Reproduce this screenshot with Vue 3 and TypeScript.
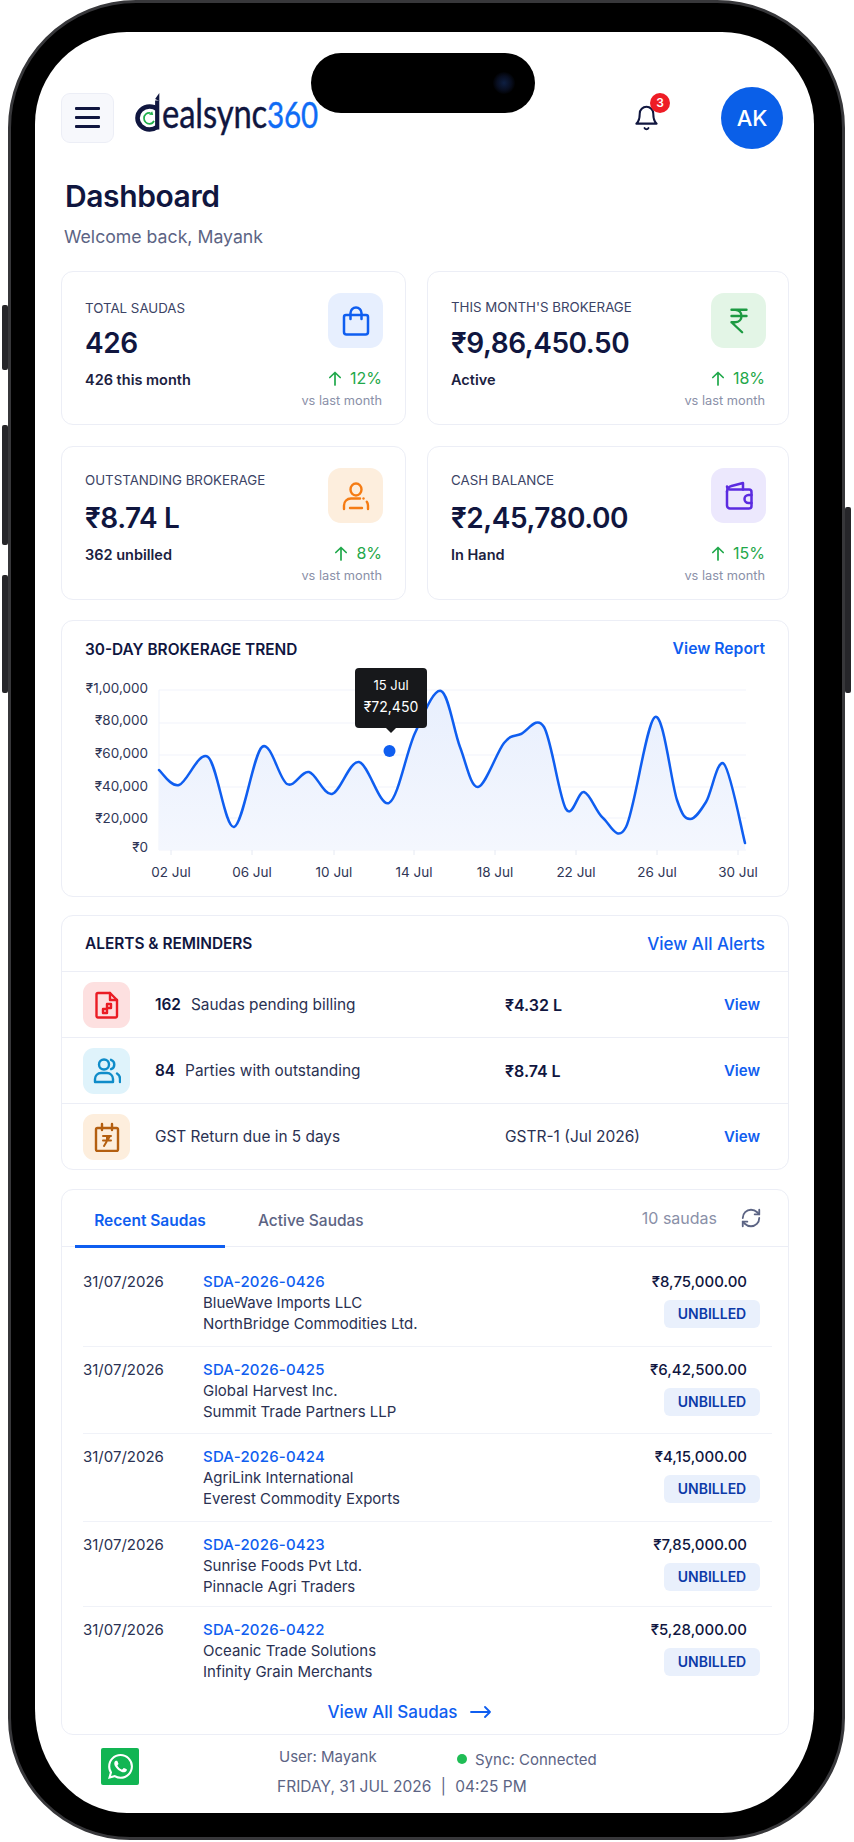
<script setup lang="ts">
const stats = [
  { label: 'TOTAL SAUDAS', value: '426', sub: '426 this month', pct: '12%', tone: 'blue', icon: 'bag' },
  { label: "THIS MONTH'S BROKERAGE", value: '₹9,86,450.50', sub: 'Active', pct: '18%', tone: 'green', icon: 'rupee' },
  { label: 'OUTSTANDING BROKERAGE', value: '₹8.74 L', sub: '362 unbilled', pct: '8%', tone: 'orange', icon: 'user' },
  { label: 'CASH BALANCE', value: '₹2,45,780.00', sub: 'In Hand', pct: '15%', tone: 'purple', icon: 'wallet' },
]

const alerts = [
  { count: '162', text: 'Saudas pending billing', amount: '₹4.32 L', bold: true, tone: 'red', icon: 'doc' },
  { count: '84', text: 'Parties with outstanding', amount: '₹8.74 L', bold: true, tone: 'cyan', icon: 'users' },
  { count: '', text: 'GST Return due in 5 days', amount: 'GSTR-1 (Jul 2026)', bold: false, tone: 'peach', icon: 'cal' },
]

const saudas = [
  { id: 'SDA-2026-0426', a: 'BlueWave Imports LLC', b: 'NorthBridge Commodities Ltd.', amt: '₹8,75,000.00' },
  { id: 'SDA-2026-0425', a: 'Global Harvest Inc.', b: 'Summit Trade Partners LLP', amt: '₹6,42,500.00' },
  { id: 'SDA-2026-0424', a: 'AgriLink International', b: 'Everest Commodity Exports', amt: '₹4,15,000.00' },
  { id: 'SDA-2026-0423', a: 'Sunrise Foods Pvt Ltd.', b: 'Pinnacle Agri Traders', amt: '₹7,85,000.00' },
  { id: 'SDA-2026-0422', a: 'Oceanic Trade Solutions', b: 'Infinity Grain Merchants', amt: '₹5,28,000.00' },
]

const yLabels = [
  { t: '₹1,00,000', y: 693 }, { t: '₹80,000', y: 725 }, { t: '₹60,000', y: 758 },
  { t: '₹40,000', y: 791 }, { t: '₹20,000', y: 823 }, { t: '₹0', y: 852 },
]
const gridY = [690, 723, 755, 787, 818, 850]
const xLabels = [
  { t: '02 Jul', x: 171 }, { t: '06 Jul', x: 252 }, { t: '10 Jul', x: 334 }, { t: '14 Jul', x: 414 },
  { t: '18 Jul', x: 495 }, { t: '22 Jul', x: 576 }, { t: '26 Jul', x: 657 }, { t: '30 Jul', x: 738 },
]

// traced off the reference, in page pixels
const pts: [number, number][] = [
  [159, 770], [179, 785], [208, 757], [234, 827], [262, 747], [287, 784], [309, 772], [332, 794],
  [359, 762], [389, 803], [415, 733], [441, 691], [460, 747], [478, 787], [504, 743], [521, 734],
  [544, 727], [566, 809], [584, 792], [603, 818], [626, 827], [655, 717], [677, 800], [690, 819],
  [706, 802], [724, 764], [745, 843],
]

function smooth(p: [number, number][]) {
  let d = `M${p[0][0]} ${p[0][1]}`
  for (let i = 0; i < p.length - 1; i++) {
    const a = p[Math.max(i - 1, 0)]
    const b = p[i]
    const c = p[i + 1]
    const e = p[Math.min(i + 2, p.length - 1)]
    const c1x = b[0] + (c[0] - a[0]) / 6
    const c1y = b[1] + (c[1] - a[1]) / 6
    const c2x = c[0] - (e[0] - b[0]) / 6
    const c2y = c[1] - (e[1] - b[1]) / 6
    d += `C${c1x.toFixed(1)} ${c1y.toFixed(1)} ${c2x.toFixed(1)} ${c2y.toFixed(1)} ${c[0]} ${c[1]}`
  }
  return d
}
const linePath = smooth(pts)
const areaPath = `${linePath}L745 850L159 850Z`
</script>

<template>
  <div class="phone">
    <i class="side s1"></i><i class="side s2"></i><i class="side s3"></i><i class="side s4"></i>
    <div class="island"><span class="lens"></span></div>
    <div class="screen">
      <header class="top">
        <button class="menu" aria-label="Menu"><span></span><span></span><span></span></button>
        <div class="logo">
          <svg class="mark" width="30" height="44" viewBox="0 0 30 44">
            <path d="M24 16C21.800 14 19.200 13.500 16.600 13.500 10 13.500 4.500 18.700 4.500 25S10 36.500 16.600 36.500c2.800 0 5.300-.8 7.400-2.500" fill="none" stroke="#10163f" stroke-width="4.600" />
            <path d="M24.200 7.500v29" stroke="#10163f" stroke-width="4.200" fill="none" />
            <path d="M22.100 6L26.300 0v8z" fill="#10163f" />
            <path d="M17.500 20c-3.800-.6-6.500 2-6.500 5.200 0 3.200 2.600 5.700 5.600 5.700 2.200 0 3.500-1 4.400-3" fill="none" stroke="#1fae4b" stroke-width="1.700" />
            <path d="M16 21.800l3.200-3.600 1 3.800z" fill="#1fae4b" />
          </svg>
          <span class="word">ealsync<b>360</b></span>
        </div>
        <div class="bell">
          <svg width="27" height="28" viewBox="0 0 24 24" fill="none" stroke="#10163f" stroke-width="1.800" stroke-linecap="round" stroke-linejoin="round">
            <path d="M6 8a6 6 0 0 1 12 0c0 7 3 9 3 9H3s3-2 3-9" />
            <path d="M10.300 21a1.940 1.940 0 0 0 3.400 0" />
          </svg>
          <span class="badge">3</span>
        </div>
        <div class="avatar">AK</div>
      </header>

      <main class="content">
        <h1>Dashboard</h1>
        <p class="welcome">Welcome back, Mayank</p>

        <section class="stats">
          <article v-for="s in stats" :key="s.label" class="card stat">
            <div class="stat-left">
              <div class="stat-label">{{ s.label }}</div>
              <div class="stat-value">{{ s.value }}</div>
              <div class="stat-sub">{{ s.sub }}</div>
            </div>
            <div class="stat-right">
              <div class="stat-icon" :class="s.tone">
                <svg v-if="s.icon === 'bag'" width="30" height="32" viewBox="0 0 30 32" fill="none" stroke="#0f5ef0" stroke-width="2.500" stroke-linecap="round" stroke-linejoin="round">
                  <path d="M5 10h20a2 2 0 0 1 2 2v15a2.500 2.500 0 0 1-2.500 2.500h-19A2.500 2.500 0 0 1 3 27V12a2 2 0 0 1 2-2z" />
                  <path d="M9.500 14V8a5.500 5.500 0 0 1 11 0v6" />
                </svg>
                <svg v-else-if="s.icon === 'rupee'" width="30" height="30" viewBox="0 0 24 24" fill="none" stroke="#1c9a42" stroke-width="1.900" stroke-linecap="round" stroke-linejoin="round">
                  <path d="M6 3h12M6 8h12M6 13l8.500 8M6 13h3M9 13c6.667 0 6.667-10 0-10" />
                </svg>
                <svg v-else-if="s.icon === 'user'" width="30" height="30" viewBox="0 0 30 30" fill="none" stroke="#f57c14" stroke-width="2.400" stroke-linecap="round" stroke-linejoin="round">
                  <ellipse cx="15" cy="8.500" rx="5.500" ry="6" />
                  <path d="M22.500 17.500h.01" />
                  <path d="M3 28v-3.500c0-4 3-7 7-7h9" />
                  <path d="M27 28v-3.500c0-1.500-.5-2.800-1.200-3.800" />
                  <path d="M9 27h12" />
                </svg>
                <svg v-else width="30" height="30" viewBox="0 0 30 30" fill="none" stroke="#5b2be0" stroke-width="2.500" stroke-linecap="round" stroke-linejoin="round">
                  <path d="M3 10.500v14A3 3 0 0 0 6 27.500h19a2.500 2.500 0 0 0 2.500-2.500V11A2.500 2.500 0 0 0 25 8.500H6A3 3 0 0 1 3 5.500" />
                  <path d="M3 10.500A6 6 0 0 1 7.500 5L19 2v6.500" />
                  <path d="M27.500 14h-3a4 4 0 0 0 0 8h3" />
                </svg>
              </div>
              <div class="stat-pct">
                <svg width="14" height="15" viewBox="0 0 14 15" fill="none" stroke="#1fa84a" stroke-width="1.700" stroke-linecap="round" stroke-linejoin="round"><path d="M7 14V1.500M1.800 6.500L7 1.500l5.200 5" /></svg>
                {{ s.pct }}
              </div>
              <div class="stat-vs">vs last month</div>
            </div>
          </article>
        </section>

        <section class="card chart-card">
          <div class="card-head">
            <h2>30-DAY BROKERAGE TREND</h2>
            <a class="link">View Report</a>
          </div>
          <div class="chart">
            <svg width="726" height="225" viewBox="62 660 726 225">
              <defs>
                <linearGradient id="area" x1="0" y1="0" x2="0" y2="1">
                  <stop offset="0" stop-color="#e8effd" />
                  <stop offset="1" stop-color="#f4f7fe" />
                </linearGradient>
              </defs>
              <line v-for="y in gridY" :key="y" x1="159" x2="746" :y1="y" :y2="y" stroke="#f1f4fb" stroke-width="1.200" />
              <line x1="159" x2="159" y1="690" y2="850" stroke="#eff3fb" />
              <line v-for="l in xLabels" :key="l.x" :x1="l.x" :x2="l.x" y1="850" y2="855" stroke="#e6eaf3" />
              <path :d="areaPath" fill="url(#area)" />
              <path :d="linePath" fill="none" stroke="#0f5ef0" stroke-width="2.500" stroke-linecap="round" />
              <circle cx="389.500" cy="751" r="6" fill="#0f5ef0" />
              <text v-for="l in yLabels" :key="l.t" x="148" :y="l.y" text-anchor="end" class="axis">{{ l.t }}</text>
              <text v-for="l in xLabels" :key="l.t" :x="l.x" y="877" text-anchor="middle" class="axis">{{ l.t }}</text>
            </svg>
            <div class="tip"><div>15 Jul</div><div class="tip-val">₹72,450</div></div>
          </div>
        </section>

        <section class="card alerts">
          <div class="alerts-head">
            <h2>ALERTS &amp; REMINDERS</h2>
            <a class="link big">View All Alerts</a>
          </div>
          <div v-for="a in alerts" :key="a.text" class="alert">
            <div class="alert-icon" :class="a.tone">
              <svg v-if="a.icon === 'doc'" width="26" height="28" viewBox="0 0 26 28" fill="none" stroke="#ea1c24" stroke-width="2.400" stroke-linejoin="round" stroke-linecap="round">
                <path d="M4 2h12l7 7v16a1.500 1.500 0 0 1-1.500 1.500h-17.500A1.500 1.500 0 0 1 2.500 25V3.500A1.500 1.500 0 0 1 4 2z" />
                <path d="M16 2v7h7" />
                <path d="M13 13h4v4h-4zM9 18h4v4H9z" stroke-width="2.400" />
              </svg>
              <svg v-else-if="a.icon === 'users'" width="28" height="28" viewBox="0 0 28 28" fill="none" stroke="#0f8cc9" stroke-width="2.400" stroke-linecap="round" stroke-linejoin="round">
                <circle cx="11" cy="7.500" r="5" />
                <path d="M2 25v-3a6 6 0 0 1 6-6h6a6 6 0 0 1 6 6v3z" />
                <path d="M18 2.800a5 5 0 0 1 0 9.400" />
                <path d="M24 16.500a6 6 0 0 1 3 5.200V25" />
              </svg>
              <svg v-else width="28" height="30" viewBox="0 0 28 30" fill="none" stroke="#b45f10" stroke-width="2.400" stroke-linecap="round" stroke-linejoin="round">
                <rect x="3" y="6" width="22" height="23" rx="1.500" />
                <path d="M9 2v6M19 2v6" />
                <path d="M10 14h8M10 18.500h8M14 14v5M17 14l-6 10" stroke-width="2" />
              </svg>
            </div>
            <div class="alert-text"><b v-if="a.count">{{ a.count }}</b>{{ a.text }}</div>
            <div class="alert-amt" :class="{ strong: a.bold }">{{ a.amount }}</div>
            <a class="link view">View</a>
          </div>
        </section>

        <section class="card recent">
          <div class="tabs">
            <div class="tab on">Recent Saudas</div>
            <div class="tab">Active Saudas</div>
            <div class="count">10 saudas</div>
            <svg class="refresh" width="24" height="22" viewBox="0 0 24 24" fill="none" stroke="#5c6484" stroke-width="2" stroke-linecap="round" stroke-linejoin="round">
              <path d="M3 12a9 9 0 0 1 9-9 9.750 9.750 0 0 1 6.740 2.740L21 8" /><path d="M21 3v5h-5" />
              <path d="M21 12a9 9 0 0 1-9 9 9.750 9.750 0 0 1-6.740-2.740L3 16" /><path d="M8 16H3v5" />
            </svg>
          </div>
          <div class="rows">
            <div v-for="r in saudas" :key="r.id" class="row">
              <div class="date">31/07/2026</div>
              <div class="who">
                <div class="sid">{{ r.id }}</div>
                <div>{{ r.a }}</div>
                <div>{{ r.b }}</div>
              </div>
              <div class="money">
                <div class="amt">{{ r.amt }}</div>
                <div class="pill">UNBILLED</div>
              </div>
            </div>
          </div>
          <a class="all">View All Saudas
            <svg width="21" height="12" viewBox="0 0 21 12" fill="none" stroke="#0f5ef0" stroke-width="1.800" stroke-linecap="round" stroke-linejoin="round"><path d="M1 6h19M15 1l5 5-5 5" /></svg>
          </a>
        </section>
      </main>

      <footer class="foot">
        <div class="wa">
          <svg width="25" height="25" viewBox="0 0 24 24" fill="#fff">
            <path d="M17.472 14.382c-.297-.149-1.758-.867-2.030-.967-.273-.099-.471-.148-.670.150-.197.297-.767.966-.940 1.164-.173.199-.347.223-.644.075-.297-.150-1.255-.463-2.390-1.475-.883-.788-1.480-1.761-1.653-2.059-.173-.297-.018-.458.130-.606.134-.133.298-.347.446-.520.149-.174.198-.298.298-.497.099-.198.050-.371-.025-.520-.075-.149-.669-1.612-.916-2.207-.242-.579-.487-.500-.669-.510-.173-.008-.371-.010-.570-.010-.198 0-.520.074-.792.372-.272.297-1.040 1.016-1.040 2.479 0 1.462 1.065 2.875 1.213 3.074.149.198 2.096 3.200 5.077 4.487.709.306 1.262.489 1.694.625.712.227 1.360.195 1.871.118.571-.085 1.758-.719 2.006-1.413.248-.694.248-1.289.173-1.413-.074-.124-.272-.198-.570-.347m-5.421 7.403h-.004a9.870 9.870 0 01-5.031-1.378l-.361-.214-3.741.982.998-3.648-.235-.374a9.860 9.860 0 01-1.510-5.260c.001-5.450 4.436-9.884 9.888-9.884 2.640 0 5.122 1.030 6.988 2.898a9.825 9.825 0 012.893 6.994c-.003 5.450-4.437 9.884-9.885 9.884m8.413-18.297A11.815 11.815 0 0012.050 0C5.495 0 .160 5.335.157 11.892c0 2.096.547 4.142 1.588 5.945L.057 24l6.305-1.654a11.882 11.882 0 005.683 1.448h.005c6.554 0 11.890-5.335 11.893-11.893a11.821 11.821 0 00-3.480-8.413z" />
          </svg>
        </div>
        <div class="foot-info">
          <div class="foot-line">
            <span class="foot-user">User: Mayank</span>
            <span class="foot-sync"><i></i>Sync: Connected</span>
          </div>
          <div class="foot-date">FRIDAY, 31 JUL 2026 <em>|</em> 04:25 PM</div>
        </div>
      </footer>
    </div>
  </div>
</template>

<style>
html, body { background: #fff; }
</style>

<style scoped>
* { box-sizing: border-box; }
.phone {
  position: relative;
  width: 837px;
  height: 1840px;
  margin-left: 8px;
  padding: 29px 28px 0 24px;
  background: #000;
  border: 3px solid #37373a;
  border-radius: 128px 128px 122px 122px;
  font-family: Inter, "Noto Sans", sans-serif;
  color: #10163f;
}
.side { position: absolute; width: 6px; background: #26262a; border-radius: 2px; }
.s1 { left: -9px; top: 302px; height: 65px; }
.s2 { left: -9px; top: 422px; height: 120px; }
.s3 { left: -9px; top: 572px; height: 118px; }
.s4 { right: -9px; top: 504px; height: 186px; }
.island {
  position: absolute;
  z-index: 2;
  left: 300px;
  top: 50px;
  width: 224px;
  height: 60px;
  background: #000;
  border-radius: 30px;
}
.lens {
  position: absolute;
  right: 20px;
  top: 19px;
  width: 22px;
  height: 22px;
  border-radius: 50%;
  background: radial-gradient(circle, #0e1f42 0, #080e20 45%, #000 75%);
}
.screen {
  width: 779px;
  height: 1781px;
  padding-top: 55px;
  background: #fff;
  border-radius: 92px 92px 92px 92px / 92px 92px 104px 104px;
  overflow: hidden;
}
.top {
  display: flex;
  align-items: center;
  height: 61px;
  padding: 0 31px 0 26px;
}
.menu {
  display: flex;
  flex-direction: column;
  justify-content: center;
  gap: 6.500px;
  align-items: center;
  width: 53px;
  height: 50px;
  padding: 0;
  background: #f7f8fc;
  border: 1px solid #eceef6;
  border-radius: 9px;
}
.menu span { display: block; width: 25px; height: 2.400px; background: #10163f; border-radius: 1px; }
.logo { display: flex; align-items: flex-start; margin-left: 19px; margin-top: -5px; height: 44px; }
.mark { flex: none; }
.word {
  display: inline-block;
  margin-left: -1px;
  margin-top: -2px;
  font-family: Lato, sans-serif;
  font-size: 41px;
  line-height: 44px;
  letter-spacing: -.2px;
  color: #10163f;
  white-space: nowrap;
  -webkit-text-stroke: .4px #10163f;
  transform: scaleX(.8);
  transform-origin: left center;
}
.word b { font-weight: 400; color: #0f6cf5; font-size: 37px; -webkit-text-stroke: .4px #0f6cf5; }
.bell { position: relative; margin-left: auto; width: 27px; height: 28px; margin-top: 1px; }
.badge {
  position: absolute;
  left: 17px;
  top: -11px;
  width: 20px;
  height: 20px;
  border-radius: 50%;
  background: #ee1c25;
  color: #fff;
  font-size: 12px;
  font-weight: 600;
  line-height: 20px;
  text-align: center;
}
.avatar {
  width: 62px;
  height: 62px;
  margin-left: 61px;
  border-radius: 50%;
  background: #0a5fe8;
  color: #fff;
  font-size: 22px;
  font-weight: 500;
  line-height: 62px;
  text-align: center;
}
.content { padding: 0 25px 0 26px; }
h1 { margin: 30px 0 0 4px; font-size: 30px; line-height: 36px; font-weight: 600; letter-spacing: -.4px; }
.welcome { margin: 12px 0 0 3px; font-size: 17.700px; line-height: 22px; color: #5c6484; }
h2 { margin: 0; font-size: 15.400px; line-height: 20px; font-weight: 600; }
.card { background: #fff; border: 1px solid #eceef6; border-radius: 12px; }
.stats { display: grid; grid-template-columns: 345px 362px; gap: 21px; margin-top: 23px; }
.stat { display: flex; justify-content: space-between; height: 154px; padding: 21px 23px 0; }
.stat-label { font-size: 13.300px; line-height: 30px; color: #3b4365; }
.stat:nth-child(2) .stat-label { margin: -1px 0 1px; }
.stat:nth-child(n+3) .stat-label { margin: -3px 0 3px; }
.stat-value { font-size: 28px; line-height: 40px; font-weight: 600; letter-spacing: -.45px; }
.stat-sub { margin-top: 7px; font-size: 14.500px; line-height: 20px; font-weight: 600; color: #1b2140; }
.stat-right { display: flex; flex-direction: column; align-items: flex-end; }
.stat-icon { display: flex; align-items: center; justify-content: center; width: 55px; height: 55px; margin-right: -1px; border-radius: 13px; }
.blue { background: #e7effe; }
.green { background: #e3f5e6; }
.orange { background: #fdeedd; }
.purple { background: #ece8fd; }
.red { background: #fde0e0; }
.cyan { background: #dff3fb; }
.peach { background: #fdeedd; }
.stat-pct { display: flex; align-items: center; gap: 8px; margin-top: 20px; font-size: 16px; line-height: 20px; color: #1fa84a; }
.stat-vs { margin-top: 5px; font-size: 12.800px; line-height: 16px; color: #8a90a8; }
.chart-card { height: 277px; margin-top: 20px; }
.card-head { display: flex; justify-content: space-between; height: 39px; padding: 19px 23px 0; }
.link { color: #0f5ef0; font-size: 15px; line-height: 20px; font-weight: 600; }
.card-head .link { font-size: 15.700px; margin-top: -1px; }
.link.big { font-size: 17px; font-weight: 500; }
.chart { position: relative; }
.chart svg { display: block; }
.axis { font-size: 13.500px; fill: #2f3656; font-family: Inter, "Noto Sans", sans-serif; }
.tip {
  position: absolute;
  left: 293px;
  top: 8px;
  width: 72px;
  height: 60px;
  padding-top: 8px;
  background: #17181b;
  border-radius: 4px;
  color: #fff;
  font-size: 13px;
  line-height: 18px;
  text-align: center;
}
.tip-val { margin-top: 4px; font-size: 14px; }
.tip::after {
  content: "";
  position: absolute;
  left: 31px;
  bottom: -5px;
  border: 5px solid transparent;
  border-top-color: #17181b;
  border-bottom: 0;
}
.alerts { margin-top: 18px; }
.alerts-head { display: flex; justify-content: space-between; align-items: center; height: 55px; padding: 0 23px; }
.alert {
  display: grid;
  grid-template-columns: 47px 375px 1fr auto;
  align-items: center;
  height: 66px;
  padding: 0 28px 0 21px;
  border-top: 1px solid #eceef6;
}
.alert-icon { display: flex; align-items: center; justify-content: center; width: 47px; height: 46px; border-radius: 11px; }
.alert-text { padding-left: 25px; font-size: 15.400px; color: #2a3152; }
.alert-text b { margin-right: 10px; font-weight: 600; color: #10163f; }
.alert-amt { font-size: 15.500px; color: #2a3152; }
.alert-amt.strong { font-size: 16px; font-weight: 600; color: #10163f; }
.recent { height: 546px; margin-top: 19px; }
.tabs { display: flex; align-items: center; height: 57px; padding: 0 25px 0 13px; border-bottom: 1px solid #eceef6; }
.tab { position: relative; height: 57px; width: 150px; font-size: 15.500px; line-height: 62px; text-align: center; font-weight: 500; color: #5c6484; }
.tab + .tab { width: auto; margin-left: 33px; }
.tab.on { color: #0f5ef0; font-weight: 600; }
.tab.on::after { content: ""; position: absolute; left: 0; right: 0; bottom: -1px; height: 2.500px; background: #0f5ef0; }
.count { margin-left: auto; font-size: 16px; color: #8a90a8; }
.refresh { margin-left: 22px; }
.rows { margin: 12px 16px 0 21px; }
.row { display: flex; padding: 12px 0 11.500px; border-bottom: 1px solid #f0f2f8; }
.row:nth-child(4) { padding-bottom: 9px; }
.row:last-child { border-bottom: 0; padding-bottom: 0; }
.date { width: 120px; font-size: 15px; line-height: 21px; color: #2a3152; }
.who { flex: 1; font-size: 15px; line-height: 21px; color: #2a3152; }
.sid { font-size: 15px; font-weight: 500; color: #0f5ef0; letter-spacing: .2px; }
.money { display: flex; flex-direction: column; align-items: flex-end; width: 96px; margin-right: 12px; }
.amt { margin-right: 13px; font-size: 15px; line-height: 21px; font-weight: 500; color: #10163f; white-space: nowrap; }
.pill {
  width: 96px;
  height: 28px;
  margin-top: 8px;
  background: #e9f0fc;
  border-radius: 6px;
  color: #0d3aa8;
  font-size: 14px;
  font-weight: 600;
  line-height: 28px;
  text-align: center;
}
.all {
  display: flex;
  align-items: center;
  justify-content: center;
  gap: 12px;
  margin-top: 19px;
  padding-right: 32px;
  color: #0f5ef0;
  font-size: 17px;
  line-height: 22px;
  font-weight: 500;
}
.foot { display: flex; padding: 13px 0 0 66px; }
.wa { display: flex; align-items: center; justify-content: center; width: 38px; height: 37px; background: #12b553; border-radius: 2px; }
.foot-info { margin-left: 138px; color: #5c6484; }
.foot-line { display: flex; height: 26px; }
.foot-user { width: 180px; padding-left: 2px; font-size: 15px; line-height: 18px; }
.foot-sync { display: flex; align-items: center; height: 22px; font-size: 15px; }
.foot-sync i { width: 10px; height: 10px; margin-right: 8px; border-radius: 50%; background: #1fbd55; }
.foot-date { margin-top: 3px; font-size: 15.500px; line-height: 20px; }
.foot-date em { margin: 0 5px; font-style: normal; }
</style>
